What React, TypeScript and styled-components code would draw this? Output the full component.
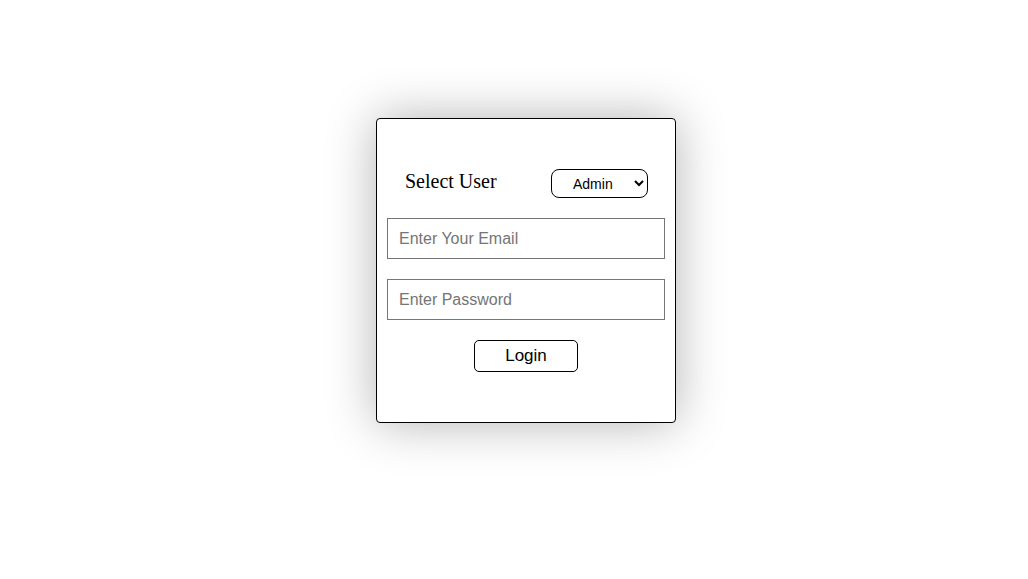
import styled, { createGlobalStyle } from "styled-components";

const GlobalStyle = createGlobalStyle`
  html, body {
    margin: 0;
    padding: 0;
    background: #ffffff;
  }
  body {
    font-family: "Liberation Serif", "Times New Roman", serif;
  }
`;

const Page = styled.main`
  min-height: 579px;
  padding: 118px 0 0 376px;
  box-sizing: border-box;
`;

const Card = styled.form`
  width: 300px;
  height: 305px;
  box-sizing: border-box;
  border: 1px solid #000000;
  border-radius: 4px;
  background: #ffffff;
  box-shadow: 0 0 50px rgba(0, 0, 0, 0.3);
  padding: 50px 10px 0 10px;
  display: flex;
  flex-direction: column;
  gap: 20px;
`;

const UserRow = styled.div`
  display: flex;
  align-items: center;
  justify-content: space-between;
  padding: 0 17px 0 18px;
`;

const Label = styled.label`
  font-family: "Liberation Serif", "Times New Roman", serif;
  font-size: 20px;
  color: #000000;
  margin-bottom: 5px;
`;

const UserSelect = styled.select`
  width: 97px;
  height: 29px;
  box-sizing: border-box;
  border: 1px solid #000000;
  border-radius: 8px;
  background: #ffffff;
  font-family: "Liberation Sans", Arial, sans-serif;
  font-size: 14px;
  color: #000000;
  padding: 0 4px 0 17px;
`;

const TextInput = styled.input`
  width: 100%;
  height: 41px;
  box-sizing: border-box;
  border: 1px solid #767676;
  border-radius: 0;
  padding: 0 11px;
  font-family: "Liberation Sans", Arial, sans-serif;
  font-size: 16px;
  color: #000000;
  outline: none;

  &::placeholder {
    color: #757575;
  }
`;

const ButtonRow = styled.div`
  display: flex;
  justify-content: center;
`;

const LoginButton = styled.button`
  width: 104px;
  height: 32px;
  box-sizing: border-box;
  border: 1px solid #000000;
  border-radius: 5px;
  background: #ffffff;
  font-family: "Liberation Sans", Arial, sans-serif;
  font-size: 17px;
  color: #000000;
  cursor: pointer;
`;

export default function App() {
  return (
    <>
      <GlobalStyle />
      <Page>
        <Card onSubmit={(e) => e.preventDefault()}>
          <UserRow>
            <Label htmlFor="role">Select User</Label>
            <UserSelect id="role" defaultValue="admin">
              <option value="admin">Admin</option>
              <option value="user">User</option>
            </UserSelect>
          </UserRow>
          <TextInput type="email" placeholder="Enter Your Email" />
          <TextInput type="password" placeholder="Enter Password" />
          <ButtonRow>
            <LoginButton type="submit">Login</LoginButton>
          </ButtonRow>
        </Card>
      </Page>
    </>
  );
}
